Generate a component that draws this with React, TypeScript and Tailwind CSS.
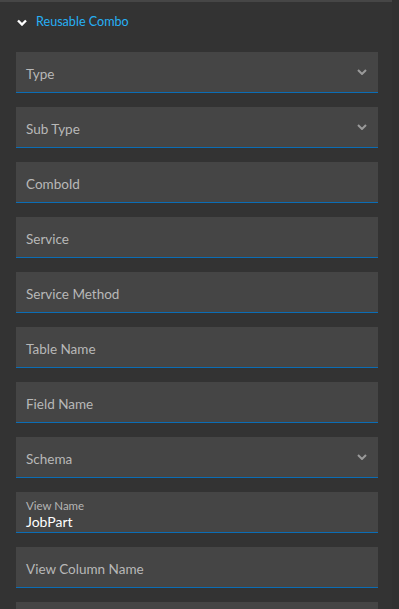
import * as React from 'react';

type Field = { label: string; select?: boolean; value?: string };

const fields: Field[] = [
  { label: 'Type', select: true },
  { label: 'Sub Type', select: true },
  { label: 'ComboId' },
  { label: 'Service' },
  { label: 'Service Method' },
  { label: 'Table Name' },
  { label: 'Field Name' },
  { label: 'Schema', select: true },
  { label: 'View Name', value: 'JobPart' },
  { label: 'View Column Name' },
  { label: '' },
];

const Chevron: React.FC<{ className?: string; width?: number }> = ({ className, width = 2 }) => (
  <svg viewBox="0 0 10 6" className={className} fill="none" stroke="currentColor" strokeWidth={width}>
    <path d="M1 1l4 4 4-4" />
  </svg>
);

const FieldBox: React.FC<{ field: Field }> = ({ field }) => (
  <div className="relative h-[41px] bg-[#454545] border-b border-[#0b6db5]">
    {field.value ? (
      <div className="pl-[10px] pt-[7px]">
        <div className="text-[11.5px] leading-[14px] text-[#b5b5b5]">{field.label}</div>
        <div className="text-[14px] leading-[17px] text-white">{field.value}</div>
      </div>
    ) : (
      <div className="pl-[10px] pt-[4px] h-[40px] flex items-center text-[13.5px] text-[#b8b8b8]">{field.label}</div>
    )}
    {field.select && <Chevron className="absolute right-[11px] top-[17px] w-[10px] h-[6px] text-[#9a9a9a]" />}
  </div>
);

export default function App() {
  return (
    <div
      className="w-[399px] h-[609px] overflow-hidden bg-[#333333] flex"
      style={{ fontFamily: 'Lato, "Noto Sans", sans-serif' }}
    >
      <div className="w-[392px] border-t-2 border-[#464646]">
        <div className="h-[38px] flex items-center pl-[17px] pt-[3px]">
          <Chevron className="w-[10px] h-[7px] text-white" width={2.4} />
          <span className="ml-[9px] text-[12.6px] text-[#26b0f5]">Reusable Combo</span>
        </div>
        <div className="pl-[16px] pr-[14px] pt-[12px] flex flex-col gap-[14px]">
          {fields.map((f, i) => (
            <FieldBox key={i} field={f} />
          ))}
        </div>
      </div>
      <div className="flex-1 bg-[#313131]" />
    </div>
  );
}
